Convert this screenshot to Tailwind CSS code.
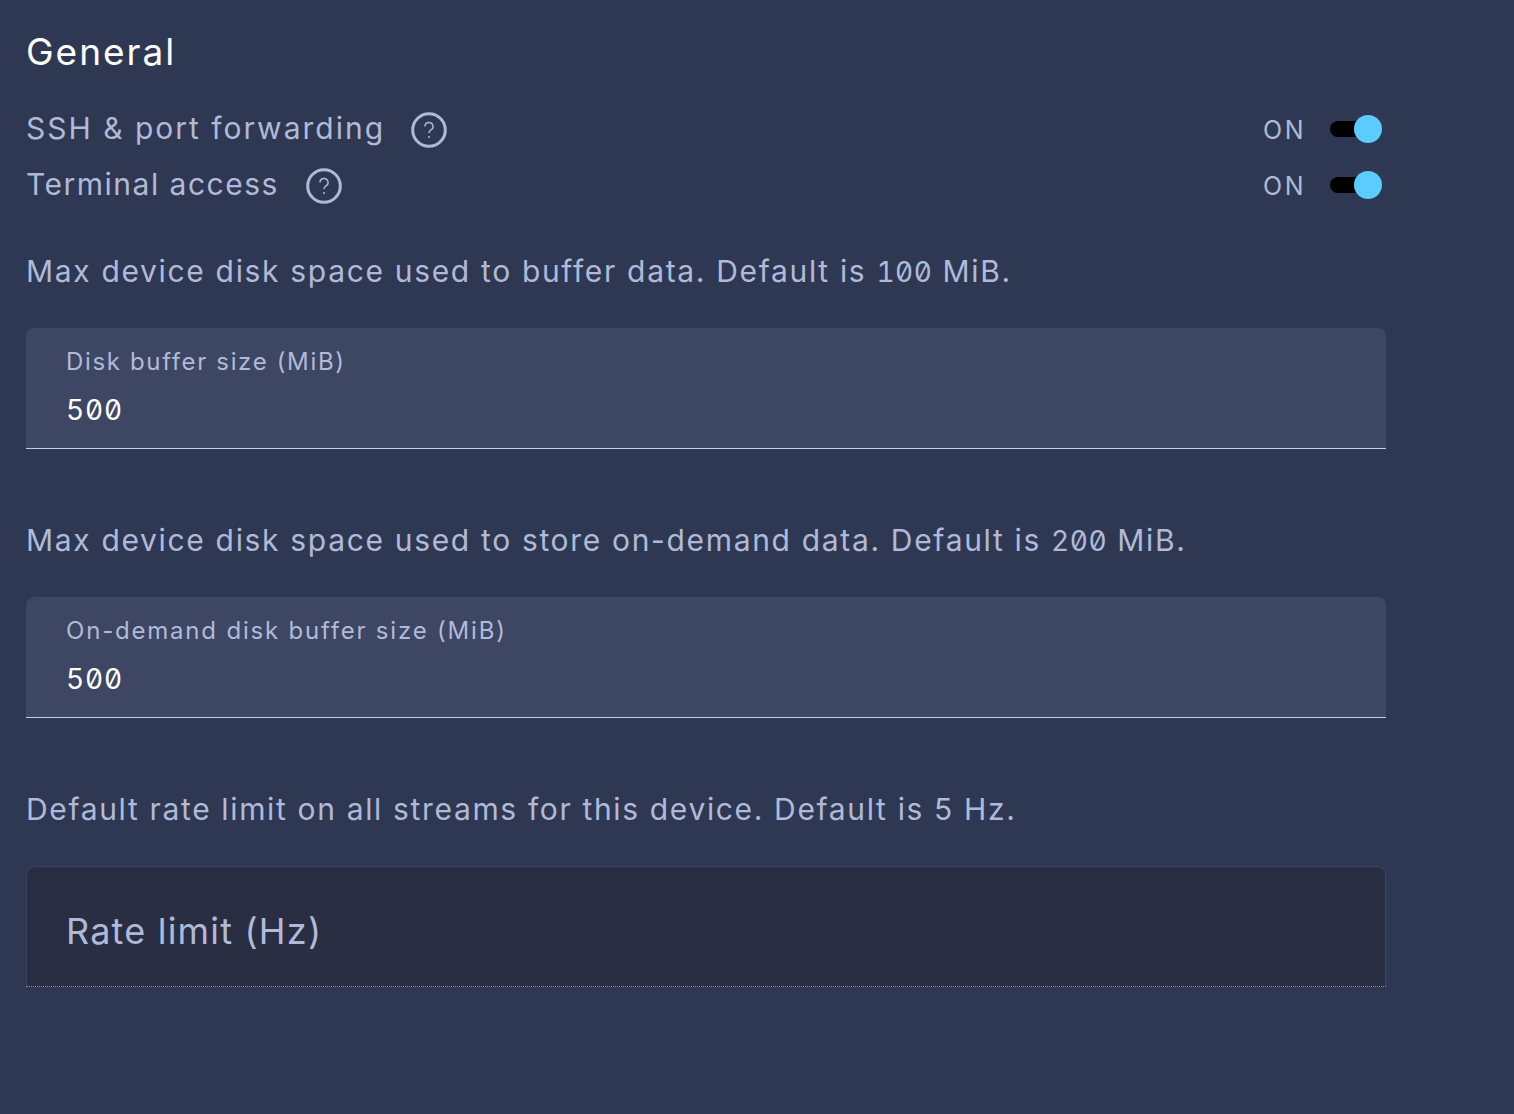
<!DOCTYPE html>
<html><head><meta charset="utf-8"><script src="https://cdn.jsdelivr.net/npm/@tailwindcss/browser@4"></script></head>
<body class="m-0">
<div class="w-[1514px] h-[1114px] overflow-hidden bg-[#2e3852] pl-[26px] font-['Inter',sans-serif] text-[#b0bad8]">
<div class="w-[1360px] pt-[30px]">
<h1 class="text-[37px] leading-[44px] font-normal text-white tracking-[2px] m-0">General</h1>
<div class="mt-[27px] flex items-center justify-between h-[56px]">
  <div class="flex items-center"><span class="text-[30px] tracking-[2px] leading-[40px] mb-[2px]">SSH &amp; port forwarding</span>
  <svg class="ml-[26px] mt-[2px]" width="36" height="36" viewBox="0 0 36 36" fill="none" stroke="#b0bad8"><circle cx="18" cy="18" r="16.3" stroke-width="3"/><path d="M14 14.500a4 4 0 1 1 6 3.400c-1.300.8-2 1.500-2 3.100" stroke-width="1.500"/><circle cx="18" cy="25" r="1" fill="#b0bad8" stroke="none"/></svg></div>
  <div class="flex items-center mr-[6px]"><span class="text-[25px] tracking-[2.5px] mr-[24px] mt-[4px]">ON</span><span class="relative block w-[50px] h-[16px] rounded-full bg-black"><span class="absolute right-[-2px] top-[-6px] w-[28px] h-[28px] rounded-full bg-[#5ccbff]"></span></span></div>
</div>
<div class="flex items-center justify-between h-[56px]">
  <div class="flex items-center"><span class="text-[30px] tracking-[1.5px] leading-[40px] mb-[2px]">Terminal access</span>
  <svg class="ml-[27px] mt-[2px]" width="36" height="36" viewBox="0 0 36 36" fill="none" stroke="#b0bad8"><circle cx="18" cy="18" r="16.3" stroke-width="3"/><path d="M14 14.500a4 4 0 1 1 6 3.400c-1.300.8-2 1.500-2 3.100" stroke-width="1.500"/><circle cx="18" cy="25" r="1" fill="#b0bad8" stroke="none"/></svg></div>
  <div class="flex items-center mr-[6px]"><span class="text-[25px] tracking-[2.5px] mr-[24px] mt-[4px]">ON</span><span class="relative block w-[50px] h-[16px] rounded-full bg-black"><span class="absolute right-[-2px] top-[-6px] w-[28px] h-[28px] rounded-full bg-[#5ccbff]"></span></span></div>
</div>
<p class="mt-[38px] text-[30px] tracking-[1.67px] leading-[40px] whitespace-nowrap">Max device disk space used to buffer data. Default is <span class="slashed-zero tabular-nums text-[28px] tracking-[0.5px]">100</span> MiB.</p>
<div class="mt-[36px] h-[121px] rounded-t-[8px] bg-[#3d4663] border-b border-[#c5cce6] pl-[40px] pt-[17px]">
  <div class="text-[24px] leading-[34px] tracking-[1.65px]">Disk buffer size (MiB)</div>
  <div class="mt-[14px] slashed-zero tabular-nums text-[28px] leading-[34px] tracking-[0.8px] text-white">500</div>
</div>
<p class="mt-[71px] text-[30px] tracking-[1.67px] leading-[40px] whitespace-nowrap">Max device disk space used to store on-demand data. Default is <span class="slashed-zero tabular-nums text-[28px] tracking-[0.5px]">200</span> MiB.</p>
<div class="mt-[36px] h-[121px] rounded-t-[8px] bg-[#3d4663] border-b border-[#c5cce6] pl-[40px] pt-[17px]">
  <div class="text-[24px] leading-[34px] tracking-[1.8px]">On-demand disk buffer size (MiB)</div>
  <div class="mt-[14px] slashed-zero tabular-nums text-[28px] leading-[34px] tracking-[0.8px] text-white">500</div>
</div>
<p class="mt-[71px] text-[30px] tracking-[1.65px] leading-[40px] whitespace-nowrap">Default rate limit on all streams for this device. Default is 5 Hz.</p>
<div class="mt-[37px] h-[121px] rounded-t-[8px] bg-[#292e42] border border-[#3a4564] border-b-0 pl-[39px] flex items-center">
  <div class="text-[36px] leading-[44px] tracking-[1.2px] mt-[7px]">Rate limit (Hz)</div>
</div>
<div class="border-t border-dotted border-[#8a93b0] -mt-px"></div>
</div>
</div>
</body></html>
